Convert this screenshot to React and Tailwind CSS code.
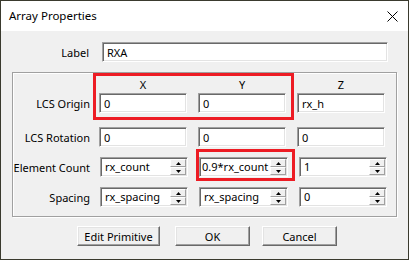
import React from "react";

const sunken =
  "bg-white border border-t-[#a0a0a0] border-l-[#a0a0a0] border-b-white border-r-white shadow-[inset_1px_1px_0_#696969,inset_-1px_-1px_0_#e3e3e3]";

function TextBox({ value, w = "w-[88px]" }) {
  return (
    <div className={`${sunken} ${w} h-[20px] flex items-center pl-[4px] leading-none`}>
      <span>{value}</span>
    </div>
  );
}

function Tri({ down }) {
  return (
    <svg width="5" height="3" viewBox="0 0 5 3" className="block">
      {down ? <polygon points="0,0 5,0 2.5,3" fill="#000" /> : <polygon points="0,3 5,3 2.5,0" fill="#000" />}
    </svg>
  );
}

function SpinBtn({ down }) {
  return (
    <div className="w-[16px] h-[8px] bg-[#f0f0f0] border border-t-white border-l-white border-b-[#a0a0a0] border-r-[#a0a0a0] flex items-center justify-center">
      <Tri down={down} />
    </div>
  );
}

function SpinBox({ value, w = "w-[88px]", pl = "pl-[4px]" }) {
  return (
    <div className={`${sunken} ${w} h-[20px] flex items-center`}>
      <span className={`flex-1 ${pl} whitespace-nowrap leading-[14px] min-w-0`}>{value}</span>
      <div className="flex flex-col mr-[1px] shrink-0">
        <SpinBtn />
        <SpinBtn down />
      </div>
    </div>
  );
}

function Button({ children, w }) {
  return (
    <div
      className={`${w} h-[20px] bg-[#f0f0f0] border border-t-white border-l-white border-b-[#696969] border-r-[#696969] shadow-[inset_-1px_-1px_0_#a0a0a0,inset_1px_1px_0_#e3e3e3] flex items-center justify-center leading-none`}
    >
      {children}
    </div>
  );
}

function RowLabel({ children }) {
  return <div className="w-[77px] text-right whitespace-nowrap leading-none">{children}</div>;
}

export default function App() {
  return (
    <div className="w-[409px] h-[260px] border border-[#3a3a2e] bg-[#f0f0f0] font-['Noto_Sans',sans-serif] text-[11px] text-black flex flex-col overflow-hidden">
      {/* Title bar */}
      <div className="h-[30px] bg-white flex items-center justify-between pl-[8px] pr-[10px] shrink-0">
        <span className="text-[11.5px] leading-none">Array Properties</span>
        <svg width="11" height="11" viewBox="0 0 11 11" className="block">
          <path d="M0.5 0.5 L10.5 10.5 M10.5 0.5 L0.5 10.5" stroke="#000" strokeWidth="1" />
        </svg>
      </div>

      {/* Label row */}
      <div className="flex items-center mt-[11px]">
        <div className="w-[88px] text-right leading-none">Label</div>
        <div className="ml-[13px]">
          <TextBox value="RXA" w="w-[286px]" />
        </div>
      </div>

      {/* Group box */}
      <div className="relative ml-[11px] mt-[10px] w-[385px] h-[145px] border border-[#a0a0a0] shadow-[inset_1px_1px_0_#fff,1px_1px_0_#fff]">
        <div className="flex mt-[3px] h-[16px] items-center leading-none">
          <div className="w-[77px]" />
          <div className="ml-[9px] w-[88px] text-center">X</div>
          <div className="ml-[11px] w-[88px] text-center">Y</div>
          <div className="ml-[11px] w-[88px] text-center">Z</div>
        </div>

        <div className="flex items-center mt-[1px]">
          <RowLabel>LCS Origin</RowLabel>
          <div className="ml-[9px] flex gap-[11px]">
            <TextBox value="0" />
            <TextBox value="0" />
            <TextBox value="rx_h" />
          </div>
        </div>

        <div className="flex items-center mt-[14px]">
          <RowLabel>LCS Rotation</RowLabel>
          <div className="ml-[9px] flex gap-[11px]">
            <TextBox value="0" />
            <TextBox value="0" />
            <TextBox value="0" />
          </div>
        </div>

        <div className="flex items-center mt-[10px]">
          <RowLabel>Element Count</RowLabel>
          <div className="ml-[10px] flex gap-[11px]">
            <SpinBox value="rx_count" />
            <SpinBox value="0.9*rx_count" w="w-[89px]" pl="pl-[2px]" />
            <SpinBox value="1" />
          </div>
        </div>

        <div className="flex items-center mt-[10px]">
          <RowLabel>Spacing</RowLabel>
          <div className="ml-[10px] flex gap-[11px]">
            <SpinBox value="rx_spacing" />
            <SpinBox value="rx_spacing" w="w-[89px]" />
            <SpinBox value="0" />
          </div>
        </div>

        {/* Red annotation boxes */}
        <div className="absolute left-[80px] top-[0px] w-[201px] h-[47px] border-[3px] border-[#ed1c24] pointer-events-none" />
        <div className="absolute left-[183px] top-[76px] w-[99px] h-[32px] border-[3px] border-[#ed1c24] pointer-events-none" />
      </div>

      {/* Buttons */}
      <div className="flex mt-[9px] ml-[76px]">
        <Button w="w-[83px]">Edit Primitive</Button>
        <div className="ml-[15px]">
          <Button w="w-[75px]">OK</Button>
        </div>
        <div className="ml-[12px]">
          <Button w="w-[75px]">Cancel</Button>
        </div>
      </div>
    </div>
  );
}
